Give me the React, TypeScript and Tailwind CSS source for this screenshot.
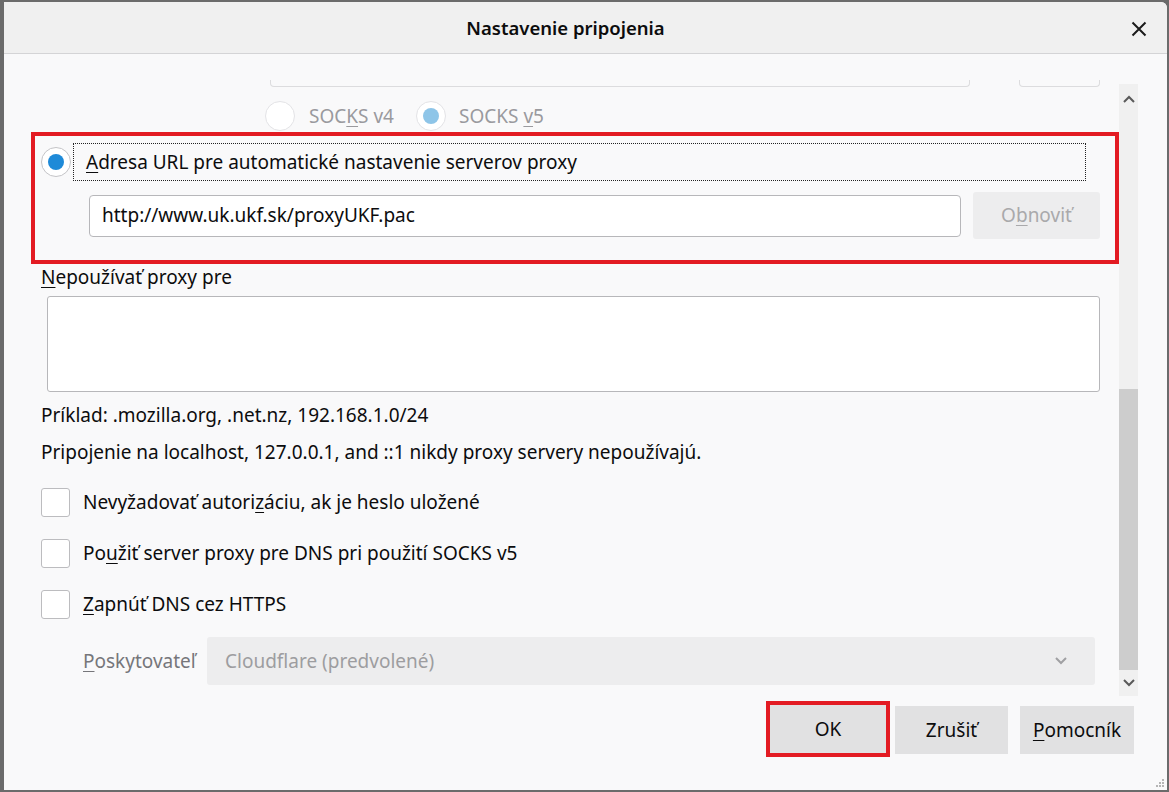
import type { ReactNode } from "react";

const font = { fontFamily: '"Noto Sans", "Open Sans", sans-serif' };

function U({ children }: { children: ReactNode }) {
  return <span className="underline underline-offset-[3px] decoration-1">{children}</span>;
}

function Radio({ checked, disabled }: { checked?: boolean; disabled?: boolean }) {
  return (
    <span
      className={
        "flex h-[30px] w-[30px] shrink-0 items-center justify-center rounded-full border bg-white " +
        (disabled ? "border-[#e3e3e6]" : "border-[#c4c4c7]")
      }
    >
      {checked && (
        <span
          className={
            "h-[16px] w-[16px] rounded-full " + (disabled ? "bg-[#8ec5e8]" : "bg-[#1e8ad8]")
          }
        />
      )}
    </span>
  );
}

function Checkbox() {
  return <span className="h-[29px] w-[29px] shrink-0 rounded-[3px] border border-[#bcbcbf] bg-white" />;
}

function Chevron({ up, className }: { up?: boolean; className?: string }) {
  return (
    <svg width="12" height="8" viewBox="0 0 12 8" className={className}>
      <path
        d={up ? "M1 7 L6 2 L11 7" : "M1 1 L6 6 L11 1"}
        fill="none"
        stroke="currentColor"
        strokeWidth="2"
      />
    </svg>
  );
}

export default function App() {
  return (
    <div
      className="flex h-[792px] w-[1169px] flex-col bg-[#6b6b6b] pb-[2px] pl-[4px] pr-[2px] pt-[2px] text-[#0c0c0d]"
      style={font}
    >
      <div className="flex flex-1 flex-col overflow-hidden rounded-tr-[6px] bg-[#f9f9fa]">
        {/* header */}
        <div className="relative flex h-[52px] shrink-0 items-center justify-center border-b border-[#d4d4d6] bg-[#f0f0f0] pr-[40px]">
          <span className="text-[18.5px] font-semibold">Nastavenie pripojenia</span>
          <svg
            width="16"
            height="16"
            viewBox="0 0 16 16"
            className="absolute right-[20px] top-[19px] text-[#1b1b1b]"
          >
            <path d="M1.5 1.5 L14.5 14.5 M14.5 1.5 L1.5 14.5" stroke="currentColor" strokeWidth="2" />
          </svg>
        </div>

        {/* scroll area */}
        <div className="flex h-[642px] shrink-0">
          <div className="flex flex-1 flex-col text-[19px]">
            <div className="mt-[26px] flex h-[7px]">
              <div className="ml-[266px] w-[700px] rounded-b-[4px] border-x border-b border-[#dcdcde]" />
              <div className="ml-[49px] w-[81px] rounded-b-[4px] border-x border-b border-[#dcdcde]" />
            </div>

            <div className="mt-[14px] flex h-[30px] items-center pl-[261px] text-[#9a9a9e]">
              <Radio disabled />
              <span className="ml-[14px]">
                SOC<U>K</U>S v4
              </span>
              <span className="ml-[22px]">
                <Radio checked disabled />
              </span>
              <span className="ml-[13px]">
                SOCKS <U>v</U>5
              </span>
            </div>

            {/* highlighted block */}
            <div className="ml-[27px] mt-[1px] w-[1088px] border-[4px] border-[#e31b23] pb-[21px] pl-[6px] pr-[15px] pt-[7px]">
              <div className="flex h-[38px] items-center">
                <Radio checked />
                <div className="ml-[2px] flex h-[38px] flex-1 items-center border border-dotted border-[#222] pl-[12px]">
                  <span>
                    <U>A</U>dresa URL pre automatické nastavenie serverov proxy
                  </span>
                </div>
                <div className="w-[14px]" />
              </div>
              <div className="mt-[11px] flex h-[47px] items-center pl-[48px]">
                <div className="flex h-[42px] flex-1 items-center rounded-[4px] border border-[#b7b7ba] bg-white pl-[12px]">
                  http://www.uk.ukf.sk/proxyUKF.pac
                </div>
                <div className="ml-[12px] flex h-[47px] w-[127px] items-center justify-center rounded-[3px] bg-[#ededee] text-[#a9a9ab]">
                  O<U>b</U>noviť
                </div>
              </div>
            </div>

            <div className="ml-[37px] mt-[1px] leading-[24px]">
              <U>N</U>epoužívať proxy pre
            </div>
            <div className="ml-[43px] mt-[7px] h-[96px] w-[1053px] rounded-[3px] border border-[#b7b7ba] bg-white" />

            <div className="ml-[37px] mt-[11px] leading-[24px]">Príklad: .mozilla.org, .net.nz, 192.168.1.0/24</div>
            <div className="ml-[37px] mt-[13px] leading-[24px]">
              Pripojenie na localhost, 127.0.0.1, and ::1 nikdy proxy servery nepoužívajú.
            </div>

            <div className="ml-[37px] mt-[24px] flex flex-col gap-[22px]">
              <div className="flex h-[29px] items-center gap-[13px]">
                <Checkbox />
                <span>
                  Nevyžadovať autori<U>z</U>áciu, ak je heslo uložené
                </span>
              </div>
              <div className="flex h-[29px] items-center gap-[13px]">
                <Checkbox />
                <span>
                  Po<U>u</U>žiť server proxy pre DNS pri použití SOCKS v5
                </span>
              </div>
              <div className="flex h-[29px] items-center gap-[13px]">
                <Checkbox />
                <span>
                  <U>Z</U>apnúť DNS cez HTTPS
                </span>
              </div>
            </div>

            <div className="ml-[79px] mt-[18px] flex items-center">
              <span className="w-[124px] text-[#76767a]">
                <U>P</U>oskytovateľ
              </span>
              <div className="flex h-[48px] w-[888px] items-center justify-between rounded-[3px] bg-[#ededee] pl-[18px] pr-[28px] text-[#9d9da0]">
                <span>Cloudflare (predvolené)</span>
                <Chevron className="text-[#a0a0a3]" />
              </div>
            </div>
          </div>

          {/* scrollbar */}
          <div className="mr-[29px] mt-[30px] flex w-[23px] flex-col bg-[#f0f0f0]">
            <div className="flex h-[30px] items-center justify-center text-[#5a5a5a]">
              <Chevron up />
            </div>
            <div className="h-[275px]" />
            <div className="flex-1 bg-[#cdcdcd]" />
            <div className="flex h-[26px] items-center justify-center text-[#5a5a5a]">
              <Chevron />
            </div>
          </div>
        </div>

        {/* buttons */}
        <div className="relative flex flex-1 items-start justify-end pr-[33px] pt-[5px] text-[19px]">
          <div className="border-[4px] border-[#e31b23]">
            <div className="flex h-[48px] w-[116px] items-center justify-center bg-[#e1e1e2]">OK</div>
          </div>
          <div className="ml-[5px] mt-[5px] flex h-[48px] w-[113px] items-center justify-center bg-[#e1e1e2]">
            Zrušiť
          </div>
          <div className="ml-[12px] mt-[5px] flex h-[48px] w-[114px] items-center justify-center bg-[#e1e1e2]">
            <span>
              <U>P</U>omocník
            </span>
          </div>
          <svg width="9" height="9" viewBox="0 0 9 9" className="absolute bottom-[2px] right-[2px] text-[#b5b5b5]">
            <rect x="6" y="0" width="2" height="2" fill="currentColor" />
            <rect x="3" y="3" width="2" height="2" fill="currentColor" />
            <rect x="6" y="3" width="2" height="2" fill="currentColor" />
            <rect x="0" y="6" width="2" height="2" fill="currentColor" />
            <rect x="3" y="6" width="2" height="2" fill="currentColor" />
            <rect x="6" y="6" width="2" height="2" fill="currentColor" />
          </svg>
        </div>
      </div>
    </div>
  );
}
